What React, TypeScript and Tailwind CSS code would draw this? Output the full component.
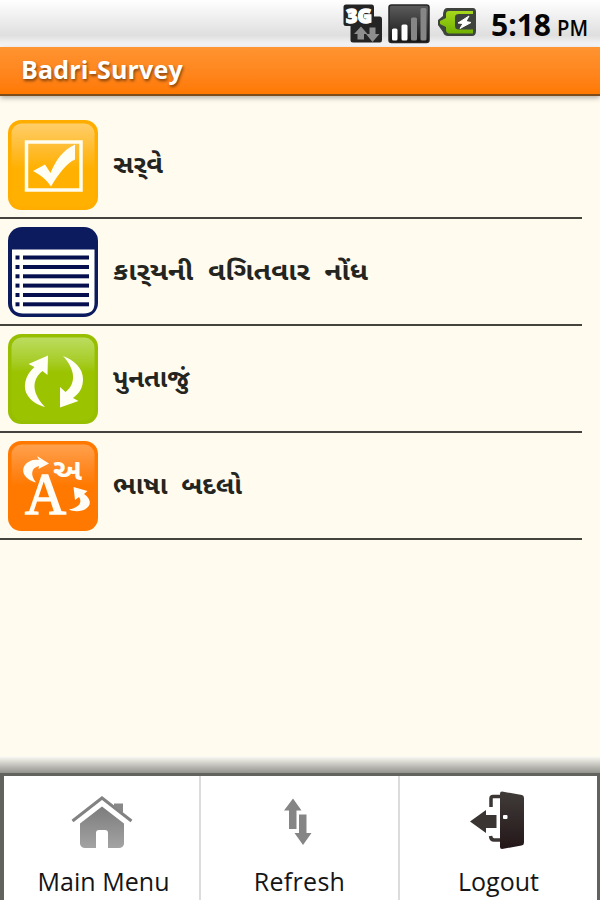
import React from "react";

const SurveyIcon = () => (
  <svg width="90" height="90" viewBox="0 0 90 90">
    <defs>
      <linearGradient id="yellowShine" x1="0" y1="0" x2="0" y2="1">
        <stop offset="0" stopColor="#ffce69" />
        <stop offset="0.32" stopColor="#ffbb2c" />
        <stop offset="0.55" stopColor="#ffb000" />
      </linearGradient>
    </defs>
    <rect width="90" height="90" rx="13" fill="#ffae00" />
    <rect x="3.5" y="3.5" width="83" height="83" rx="10" fill="url(#yellowShine)" />
    <rect x="18.5" y="22" width="54.5" height="48" fill="none" stroke="#fffdf0" strokeWidth="3.5" />
    <path d="M25 51 L37 44.500 L42.500 53 C48 40 54 31 67 24.500 L67 39.500 C59 43 51 53 43 66.500 C38 59 31 54 25 51Z" fill="#fffef5" />
  </svg>
);

const DetailIcon = () => (
  <svg width="90" height="90" viewBox="0 0 90 90">
    <rect width="90" height="90" rx="14" fill="#0c1b5e" />
    <path d="M4 22.5 H86.5 V76 Q86.5 86.500 76 86.500 H15 Q4 86.500 4 76Z" fill="#fffffb" />
    <g fill="#07104f">
      {[28.5, 38, 47.3, 56.6, 66, 75.3].map((y) => (
        <React.Fragment key={y}>
          <rect x="7.5" y={y} width="4" height="4" />
          <rect x="15" y={y} width="66" height="4" />
        </React.Fragment>
      ))}
    </g>
  </svg>
);

const UpdateIcon = () => (
  <svg width="90" height="90" viewBox="0 0 90 90">
    <defs>
      <linearGradient id="greenShine" x1="0" y1="0" x2="0" y2="1">
        <stop offset="0" stopColor="#bcdc5f" />
        <stop offset="0.3" stopColor="#a6cc25" />
        <stop offset="0.42" stopColor="#9bc300" />
      </linearGradient>
    </defs>
    <rect width="90" height="90" rx="13" fill="#97bf00" />
    <rect x="3.5" y="3.5" width="83" height="83" rx="10" fill="url(#greenShine)" />
    <g fill="#fffff5">
      <path d="M40 21.5 L20.5 30 L26.5 33 C17 41 14 54 20 62 C24 68 30 71 37 73 C28 64 24 53 28 45 C30 41 32 39 34.5 37 L39.5 41Z" />
      <path d="M55 22 C66 26 75 34 75 45 C75 53 72 59 65 64 L70.5 67 L52 73.5 L52 53 L57.5 58 C68 50 68 36 55 22Z" />
    </g>
  </svg>
);

const LanguageIcon = () => (
  <svg width="90" height="90" viewBox="0 0 90 90">
    <defs>
      <linearGradient id="orangeShine" x1="0" y1="0" x2="0" y2="1">
        <stop offset="0" stopColor="#ffa14d" />
        <stop offset="0.3" stopColor="#ff8720" />
        <stop offset="0.5" stopColor="#ff7900" />
      </linearGradient>
    </defs>
    <rect width="90" height="90" rx="13" fill="#ff7900" />
    <rect x="3.5" y="3.5" width="83" height="83" rx="10" fill="url(#orangeShine)" />
    <g fill="#fffdf5">
      <path d="M29 15 L41 22.500 L30.500 28 L31 25 C23 27 22 34 28 41.500 C18 39 12 31 17 24 C20 20 25 18 31 19Z" />
      <path d="M65.500 46 L79.500 50 L76 53 C85 59 83 67 74 69.500 C69 71 64 70 61 68.500 C70 67 75 62 71 56 L67 59Z" />
      <text x="17" y="72.5" fontFamily="Liberation Serif, serif" fontSize="59" stroke="#fffdf5" strokeWidth="1.6" textLength="41" lengthAdjust="spacingAndGlyphs">A</text>
      <text x="45" y="38.5" fontFamily="Noto Sans Gujarati, Noto Sans, sans-serif" fontWeight="700" fontSize="29" textLength="29" lengthAdjust="spacingAndGlyphs">અ</text>
    </g>
  </svg>
);

const HomeIcon = () => (
  <svg width="62" height="54" viewBox="0 0 62 54">
    <defs>
      <linearGradient id="homeGrey" x1="0" y1="0" x2="0" y2="1">
        <stop offset="0" stopColor="#7c7c7c" />
        <stop offset="1" stopColor="#a3a3a3" />
      </linearGradient>
    </defs>
    <path d="M1.5 25 L31 2 L60.5 25" fill="none" stroke="#828282" strokeWidth="3" />
    <path d="M43 7.5 H52 V17 L43 10.5Z" fill="#888" />
    <path d="M31 10.5 L53 27.5 V48 Q52 52 48 52 H37 V37 Q37 34 34 34 H28 Q25 34 25 37 V52 H14 Q10 52 9 48 V27.5Z" fill="url(#homeGrey)" />
  </svg>
);

const RefreshIcon = () => (
  <svg width="28" height="48" viewBox="0 0 28 48">
    <path d="M9 0.5 L17.5 12.5 H12.5 V31 H5 V12.5 H0Z" fill="#858585" />
    <path d="M15 16.5 H22.5 V35 H27.5 L19 47 L10.5 35 H15Z" fill="#858585" />
  </svg>
);

const LogoutIcon = () => (
  <svg width="54" height="58" viewBox="0 0 54 58">
    <defs>
      <linearGradient id="doorDark" x1="0" y1="0" x2="0" y2="1">
        <stop offset="0" stopColor="#403b39" />
        <stop offset="1" stopColor="#241719" />
      </linearGradient>
    </defs>
    <path d="M30 5.5 H23 Q21 5.5 21 7.5 V16 M20.5 45 Q21 49 24 49 H30" fill="none" stroke="#3b3634" strokeWidth="3.5" />
    <path d="M32 0.5 L52 4 Q54 4.5 54 7 V51 Q54 54 51.5 54.5 L32 58 Q30 58 30 56 V2.5 Q30 0.5 32 0.5Z" fill="url(#doorDark)" />
    <rect x="33" y="24" width="4.5" height="4" rx="1" fill="#fff" />
    <path d="M0 30.5 L16 19 V24 H26.5 V37 H16 V42Z" fill="#3a3432" />
  </svg>
);

const StatusIcons = () => (
  <svg width="135" height="41" viewBox="0 0 135 41">
    <defs>
      <linearGradient id="battery" x1="0" y1="0" x2="0" y2="1">
        <stop offset="0" stopColor="#a6d81c" />
        <stop offset="1" stopColor="#6fb000" />
      </linearGradient>
      <linearGradient id="signal" x1="0" y1="0" x2="0" y2="1">
        <stop offset="0" stopColor="#5c5c5c" />
        <stop offset="1" stopColor="#151515" />
      </linearGradient>
    </defs>
    {/* 3G */}
    <path d="M4 0.5 H30 Q32 0.5 32 3 V12.500 H38 Q40 12.500 40 15 V36 Q40 38.500 38 38.500 H11 Q8.500 38.500 8.500 36 V22 H4 Q1.500 22 1.500 20 V3 Q1.500 0.500 4 0.500Z" fill="#242424" />
    <text x="4" y="18.5" fill="#fff" stroke="#fff" strokeWidth="1.3" fontFamily="Open Sans, sans-serif" fontWeight="800" fontSize="19" textLength="26" lengthAdjust="spacingAndGlyphs">3G</text>
    <path d="M19 22.5 L25.500 30 H22 V35.500 H15.500 V30 H12Z M27.500 23.500 H33.500 V30 H37.500 L30.500 38 L24 30 H27.500Z" fill="#8e8e8e" />
    {/* signal */}
    <rect x="47" y="1" width="40" height="37.5" rx="2.5" fill="url(#signal)" stroke="#262626" strokeWidth="1.5" />
    <rect x="50" y="24.5" width="5.5" height="12" rx="1.5" fill="#fff" />
    <rect x="59.5" y="20.5" width="6" height="16" rx="1.5" fill="#fff" />
    <rect x="69" y="13.5" width="6" height="23" rx="1.5" fill="#868686" />
    <rect x="78.5" y="4" width="6" height="32.5" rx="1.5" fill="#868686" />
    {/* battery */}
    <path d="M105 4 H131 Q134 4 134 8 V27 Q134 32 130 32 H106 Q102 32 101 28 L96 21 V16 L101 12 Q101 4 105 4Z" fill="#3e443b" />
    <path d="M107 7 H131 V10 H117 Q113 10 113 13 V22 Q113 25.500 117 25.500 H131 V29.500 H107 Q104 29 104 26 V23 L98 20 V17 L104 14 V10 Q104 7 107 7Z" fill="url(#battery)" />
    <path d="M127 12 L116 19 L121 19.500 L118 24.500 L129 18.500 L124 17.500Z" fill="#fff" stroke="#fff" />
  </svg>
);

const menuItems = [
  { title: "સર્\u200cવે", icon: <SurveyIcon />, width: 50 },
  { title: "કાર્\u200cયની  વગિતવાર  નોંધ", icon: <DetailIcon />, width: 255 },
  { title: "પુનતાજું", icon: <UpdateIcon />, width: 77 },
  { title: "ભાષા  બદલો", icon: <LanguageIcon />, width: 129 },
];

export default function App() {
  return (
    <div className="flex h-[900px] w-[600px] flex-col overflow-hidden bg-[#fffbef] font-['Noto_Sans','Open_Sans',sans-serif]">
      {/* Status bar */}
      <div className="flex h-[47px] shrink-0 justify-end bg-linear-to-b from-white via-[#dfdfdf] via-75% to-[#fafafa] pr-2">
        <div className="mt-1 mr-[14px]">
          <StatusIcons />
        </div>
        <svg className="overflow-visible" width="101" height="47" fill="#050505" fontWeight="700" fontFamily="Open Sans, sans-serif">
          <text x="0" y="36" fontSize="30" textLength="60" lengthAdjust="spacingAndGlyphs">5:18</text>
          <text x="66" y="36" fontSize="21" fontWeight="600" textLength="31" lengthAdjust="spacingAndGlyphs">PM</text>
        </svg>
      </div>

      {/* Title bar */}
      <div className="flex h-[49px] shrink-0 items-center border-b-2 border-[#7c4c1c] bg-linear-to-b from-[#ff9430] to-[#ff7900] pl-[21px] shadow-[0_2px_5px_rgba(0,0,0,0.3)]">
        <h1 className="-mt-0.5 font-['Open_Sans',sans-serif] text-[25px] font-bold tracking-[0.2px] text-white [text-shadow:1px_2px_3px_rgba(0,0,0,0.5)]">Badri-Survey</h1>
      </div>

      <ul className="w-[582px] grow pt-4">
        {menuItems.map((item) => (
          <li key={item.title} className="flex h-[107px] items-center border-b-2 border-[#45433e]">
            <div className="ml-2">{item.icon}</div>
            <svg className="ml-[15px] overflow-visible" width={item.width} height="50">
              <text
                y="33"
                fill="#25251f"
                fontSize="25"
                fontWeight="700"
                fontFamily="Noto Sans Gujarati, Noto Sans, sans-serif"
                textLength={item.width}
                lengthAdjust="spacingAndGlyphs"
                xmlSpace="preserve"
              >
                {item.title}
              </text>
            </svg>
          </li>
        ))}
      </ul>

      {/* Bottom navigation */}
      <div className="h-[17px] shrink-0 bg-linear-to-b from-[#fffdf6] to-[#94948f]" />
      <nav className="flex h-[127px] shrink-0 border-t-[3px] border-r-[3px] border-l-4 border-[#62625f] bg-white font-['Open_Sans',sans-serif] text-[25px] text-[#151515]">
        <div className="flex w-[197px] flex-col items-center border-r-2 border-[#dcdcdc]">
          <div className="mt-5 h-[67px]">
            <HomeIcon />
          </div>
          <span className="ml-1 leading-9 tracking-[0.05px]">Main Menu</span>
        </div>
        <div className="flex w-[199px] flex-col items-center border-r-2 border-[#dcdcdc]">
          <div className="mt-[22px] mr-[3px] h-[65px]">
            <RefreshIcon />
          </div>
          <span className="leading-9 tracking-[0.3px]">Refresh</span>
        </div>
        <div className="flex grow flex-col items-center">
          <div className="mt-[15px] mr-1 h-[72px]">
            <LogoutIcon />
          </div>
          <span className="leading-9">Logout</span>
        </div>
      </nav>
    </div>
  );
}
